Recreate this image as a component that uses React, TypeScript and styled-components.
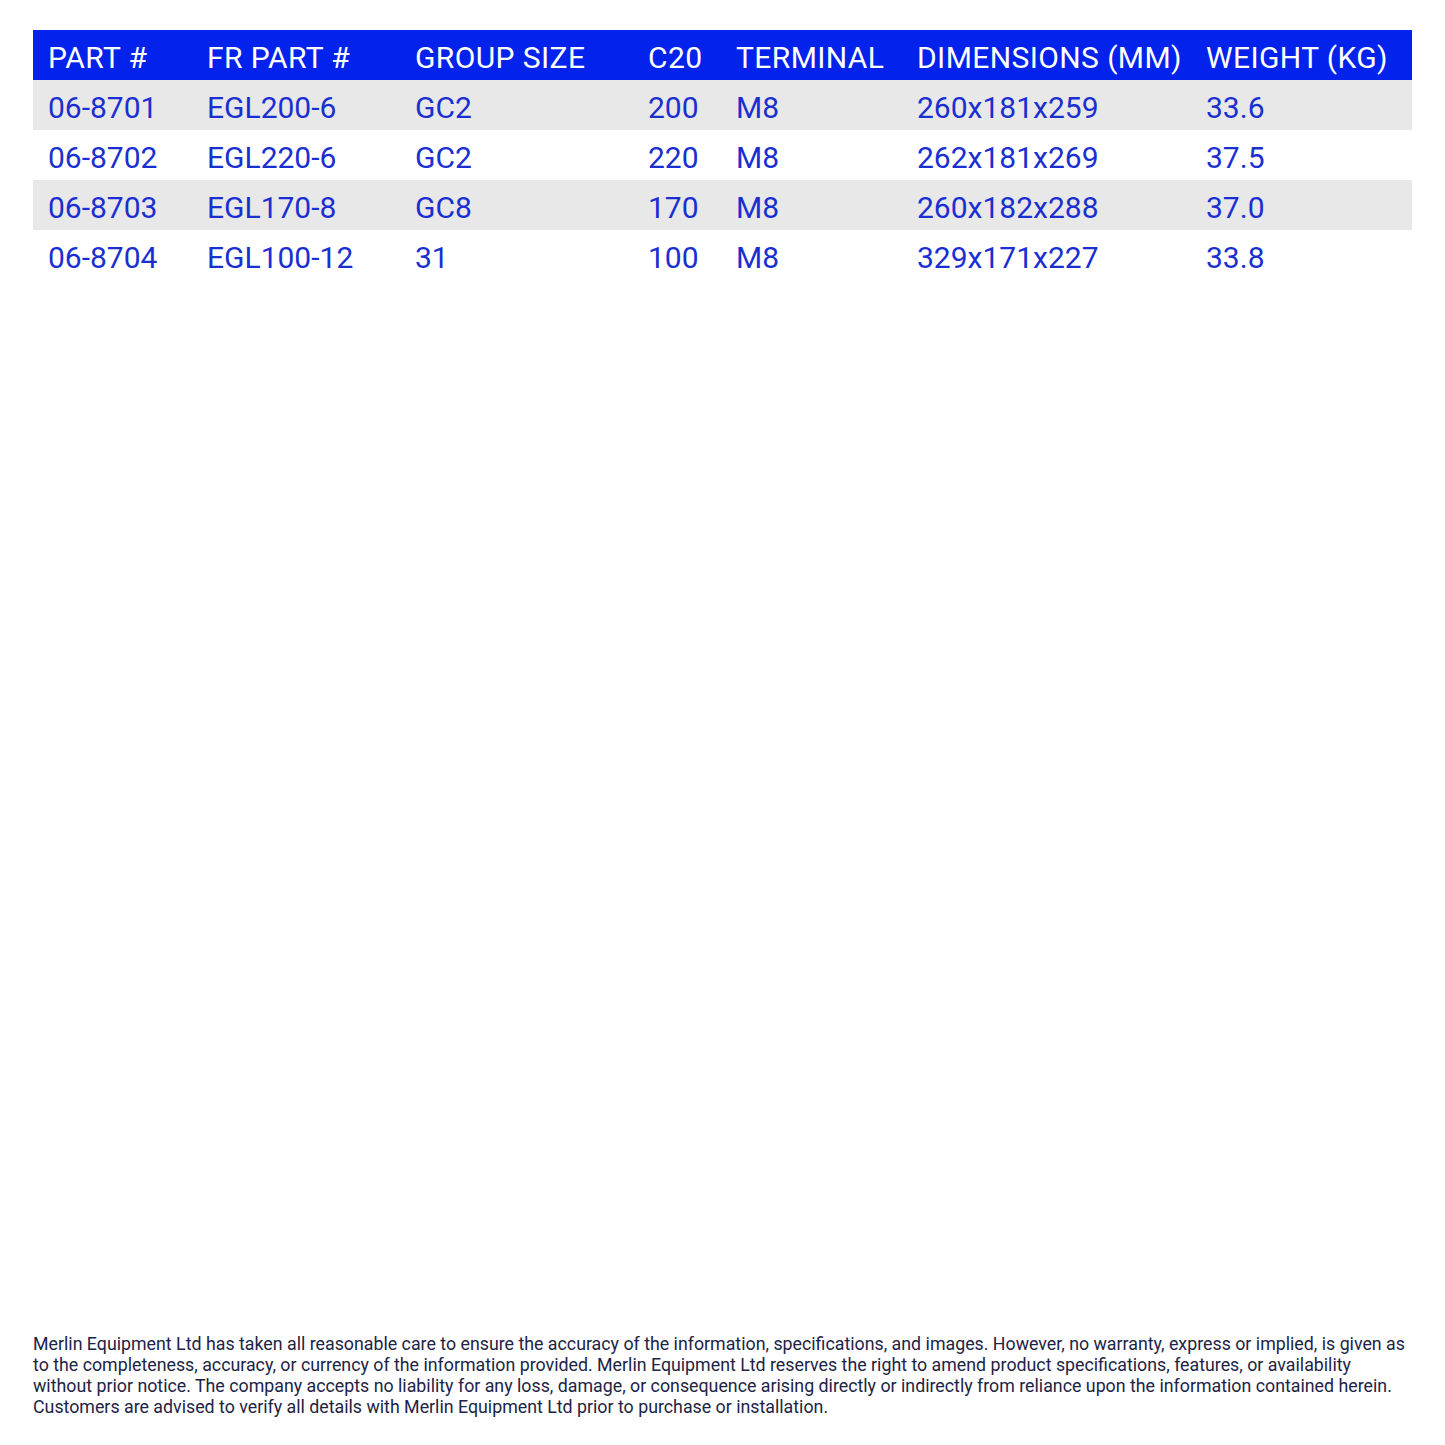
import styled, { createGlobalStyle } from "styled-components";

type Battery = {
  part: string;
  frPart: string;
  group: string;
  c20: string;
  terminal: string;
  dimensions: string;
  weight: string;
};

const columns = [
  { label: "PART #", width: 159 },
  { label: "FR PART #", width: 208 },
  { label: "GROUP SIZE", width: 233 },
  { label: "C20", width: 88 },
  { label: "TERMINAL", width: 181 },
  { label: "DIMENSIONS (MM)", width: 289 },
  { label: "WEIGHT (KG)", width: 221 },
];

const batteries: Battery[] = [
  { part: "06-8701", frPart: "EGL200-6", group: "GC2", c20: "200", terminal: "M8", dimensions: "260x181x259", weight: "33.6" },
  { part: "06-8702", frPart: "EGL220-6", group: "GC2", c20: "220", terminal: "M8", dimensions: "262x181x269", weight: "37.5" },
  { part: "06-8703", frPart: "EGL170-8", group: "GC8", c20: "170", terminal: "M8", dimensions: "260x182x288", weight: "37.0" },
  { part: "06-8704", frPart: "EGL100-12", group: "31", c20: "100", terminal: "M8", dimensions: "329x171x227", weight: "33.8" },
];

const GlobalStyle = createGlobalStyle`
  html, body {
    margin: 0;
    padding: 0;
    background: #ffffff;
  }
  body {
    font-family: Roboto, "Liberation Sans", sans-serif;
  }
`;

const App = () => {
  return (
    <>
      <GlobalStyle />
      <Page>
        <SpecTable>
          <colgroup>
            {columns.map((col) => (
              <Column key={col.label} $width={col.width} />
            ))}
          </colgroup>
          <thead>
            <tr>
              {columns.map((col) => (
                <HeadCell key={col.label}>{col.label}</HeadCell>
              ))}
            </tr>
          </thead>
          <tbody>
            {batteries.map((b, index) => (
              <Row key={b.part} $shaded={index % 2 === 0}>
                <Cell>{b.part}</Cell>
                <Cell>{b.frPart}</Cell>
                <Cell>{b.group}</Cell>
                <Cell>{b.c20}</Cell>
                <Cell>{b.terminal}</Cell>
                <Cell>{b.dimensions}</Cell>
                <Cell>{b.weight}</Cell>
              </Row>
            ))}
          </tbody>
        </SpecTable>
        <Disclaimer>
          Merlin Equipment Ltd has taken all reasonable care to ensure the accuracy of the information,
          specifications, and images. However, no warranty, express or implied, is given as to the
          completeness, accuracy, or currency of the information provided. Merlin Equipment Ltd reserves
          the right to amend product specifications, features, or availability without prior notice. The
          company accepts no liability for any loss, damage, or consequence arising directly or indirectly
          from reliance upon the information contained herein. Customers are advised to verify all details
          with Merlin Equipment Ltd prior to purchase or installation.
        </Disclaimer>
      </Page>
    </>
  );
};

const Page = styled.div`
  box-sizing: border-box;
  min-height: 100vh;
  display: flex;
  flex-direction: column;
  padding: 30px 33px 28px 33px;
`;

const SpecTable = styled.table`
  width: 1379px;
  border-collapse: collapse;
  table-layout: fixed;
`;

const Column = styled.col<{ $width: number }>`
  width: ${({ $width }) => $width}px;
`;

const HeadCell = styled.th`
  height: 50px;
  box-sizing: border-box;
  padding: 4px 0 0 15px;
  background-color: #0323ec;
  color: #ffffff;
  font-size: 30px;
  font-weight: 400;
  text-align: left;
  white-space: nowrap;
  letter-spacing: 0.4px;
`;

const Row = styled.tr<{ $shaded: boolean }>`
  background-color: ${({ $shaded }) => ($shaded ? "#e8e8e8" : "transparent")};
`;

const Cell = styled.td`
  height: 50px;
  box-sizing: border-box;
  padding: 5px 0 0 15px;
  color: #1a2fd2;
  font-size: 30px;
  font-weight: 400;
  white-space: nowrap;
  letter-spacing: 0;
`;

const Disclaimer = styled.p`
  margin: auto 0 0 0;
  width: 1379px;
  color: #1d2445;
  font-size: 17.8px;
  line-height: 21px;
`;

export default App;
